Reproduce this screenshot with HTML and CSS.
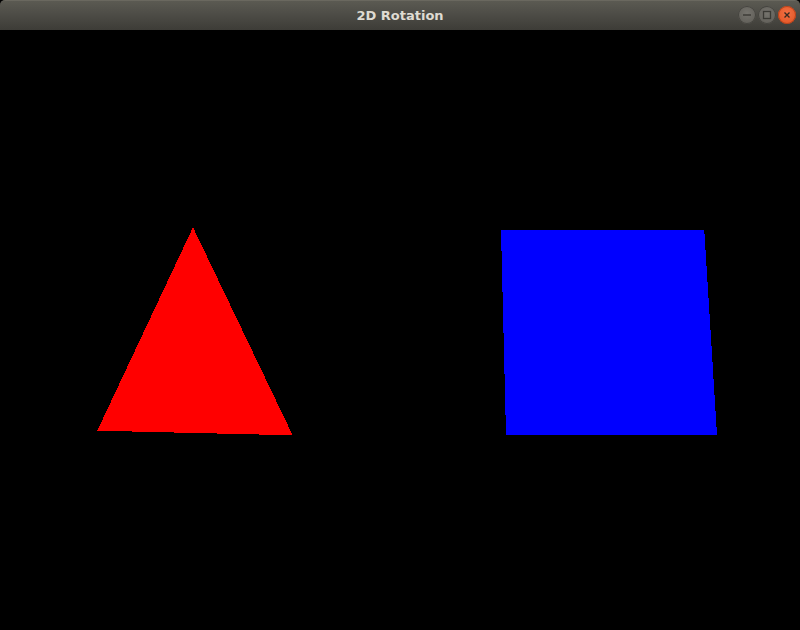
FILE: index.html
```html
<!DOCTYPE html>
<html>
<head>
<meta charset="utf-8">
<title>2D Rotation</title>
<link rel="stylesheet" href="styles.css">
</head>
<body>
<div class="window">
  <div class="titlebar">
    <div class="title">2D Rotation</div>
    <div class="controls">
      <span class="btn btn-min"><svg width="18" height="18" viewBox="0 0 18 18"><line x1="5" y1="9" x2="13" y2="9" stroke="#3a3934" stroke-width="1.4"/></svg></span>
      <span class="btn btn-max"><svg width="18" height="18" viewBox="0 0 18 18"><rect x="5.5" y="5.5" width="7" height="7" fill="none" stroke="#3a3934" stroke-width="1.3"/></svg></span>
      <span class="btn btn-close"><svg width="18" height="18" viewBox="0 0 18 18"><path d="M6.5 6.5 L11.5 11.5 M11.5 6.5 L6.5 11.5" stroke="#3a2a20" stroke-width="1.4"/></svg></span>
    </div>
  </div>
  <svg class="canvas" width="800" height="600" viewBox="0 0 800 600">
    <polygon points="193,197.3 97.3,400.7 292.7,405.3" fill="#ff0000" shape-rendering="crispEdges"/>
    <polygon points="501,200 704.3,200 717,404.7 506,404.7" fill="#0000ff" shape-rendering="crispEdges"/>
  </svg>
</div>
</body>
</html>
```
FILE: styles.css
```css
html, body {
  margin: 0;
  padding: 0;
  background: #000;
  width: 800px;
  height: 630px;
  overflow: hidden;
}
.window {
  display: flex;
  flex-direction: column;
  width: 800px;
  height: 630px;
}
.titlebar {
  position: relative;
  height: 30px;
  flex: 0 0 30px;
  box-sizing: border-box;
  background: linear-gradient(#5b5a52 0%, #4f4e48 40%, #3d3c37 100%);
  border-top: 1px solid #6a685f;
  border-radius: 5px 5px 0 0;
  display: flex;
  align-items: center;
  justify-content: center;
}
.title {
  font-family: "DejaVu Sans", sans-serif;
  font-weight: bold;
  font-size: 13px;
  color: #dfdbd2;
  letter-spacing: 0;
  margin-top: 0px;
}
.controls {
  position: absolute;
  right: 4px;
  top: 5px;
  display: flex;
  gap: 2px;
}
.btn {
  width: 18px;
  height: 18px;
  border-radius: 50%;
  box-sizing: border-box;
  display: flex;
}
.btn-min, .btn-max {
  background: radial-gradient(circle at 50% 40%, #75736d 0%, #63615b 70%, #55534e 100%);
  box-shadow: inset 0 0 0 1px #45443f;
}
.btn-close {
  background: radial-gradient(circle at 50% 40%, #f27044 0%, #e65a2a 70%, #c9481d 100%);
  box-shadow: inset 0 0 0 1px #b4421c;
}
.canvas {
  display: block;
  background: #000;
}
```
